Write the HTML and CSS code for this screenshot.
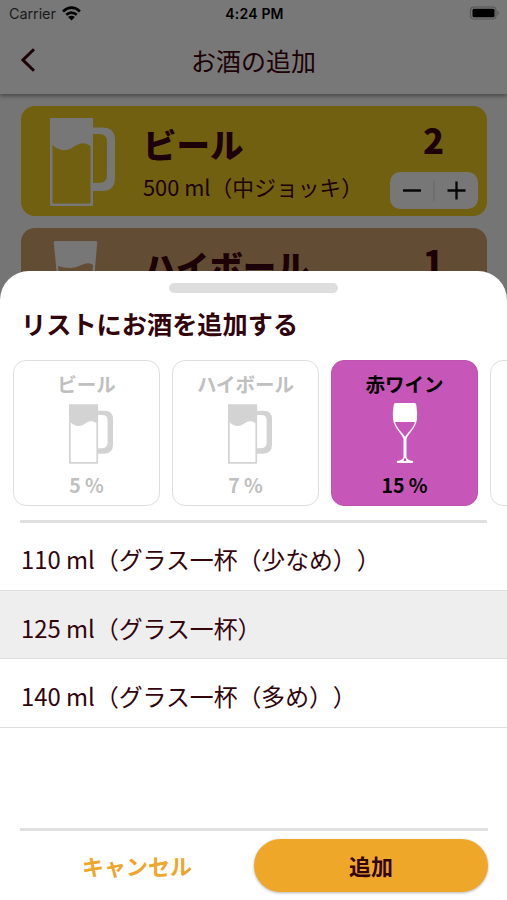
FILE: index.html
```html
<!DOCTYPE html>
<html lang="ja">
<head>
<meta charset="utf-8">
<title>お酒の追加</title>
<link rel="stylesheet" href="styles.css">
</head>
<body>
<svg class="defs" aria-hidden="true">
  <symbol id="mug" viewBox="0 0 65 88">
    <path fill-rule="evenodd" d="M0 0H43V87Q43 88 42 88H1Q0 88 0 87ZM2.500 27V84.500Q2.500 85.500 3.500 85.500H39.500Q40.500 85.500 40.500 84.500V28C32 22 27 27 20 31C13 33.500 8 32 2.500 27ZM43 9.500H52Q65 9.500 65 22V60Q65 73 52 73H43V65H49Q57 65 57 57V24Q57 16 49 16H43Z"/>
  </symbol>
</svg>
<main class="screen">
  <header class="header">
    <div class="status">
      <div class="carrier">Carrier
        <svg class="wifi" viewBox="0 0 18 14"><g fill="none" stroke="#000" stroke-width="2.500"><path d="M1 5Q9-2 17 5"/><path d="M4 8.200Q9 4 14 8.200"/></g><path d="M5.800 10.300Q9 7.800 12.200 10.300L9 13.700Z"/></svg>
      </div>
      <div class="clock">4:24 PM</div>
      <svg class="battery" viewBox="0 0 31 15"><rect x="1.500" y="1" width="25.500" height="12" rx="3.500" fill="#777" stroke="#555" stroke-width="1.200"/><rect x="3.500" y="2.700" width="22" height="8.600" rx="1.500"/><path d="M28.500 4.500Q31 7 28.500 10Z" fill="#555"/></svg>
    </div>
    <div class="navbar">
      <svg class="back" viewBox="0 0 14 24"><path d="M13 1.200L2 12L13 22.800" fill="none" stroke="#1c0206" stroke-width="3"/></svg>
      <h1>お酒の追加</h1>
      <span></span>
    </div>
  </header>
  <section class="drinks">
    <article class="drink beer">
      <svg class="drink-icon"><use href="#mug"/></svg>
      <div class="drink-text"><h2>ビール</h2><p>500 ml（中ジョッキ）</p></div>
      <div class="amount">
        <strong>2</strong>
        <div class="stepper">
          <svg viewBox="0 0 88 37"><path d="M13 18.500H31M57.500 18.500H75.500M66.500 9.500V27.500" stroke="#070707" stroke-width="2.300"/><path d="M44 8.500V29" stroke="#686868"/></svg>
        </div>
      </div>
    </article>
    <article class="drink highball">
      <svg class="drink-icon" viewBox="0 0 65 88"><path fill-rule="evenodd" d="M5 1H46Q48 1 47 5L40 88H12L4 5Q3 1 5 1ZM8 26L14 85H38L43 25C35 20 31 28 20 28Q14 28 8 26Z"/></svg>
      <div class="drink-text"><h2>ハイボール</h2></div>
      <div class="amount"><strong>1</strong></div>
    </article>
  </section>
  <section class="sheet">
    <div class="handle"></div>
    <h2 class="sheet-title">リストにお酒を追加する</h2>
    <div class="types">
      <div class="type"><span>ビール</span><svg><use href="#mug"/></svg><span>5 %</span></div>
      <div class="type"><span>ハイボール</span><svg><use href="#mug"/></svg><span>7 %</span></div>
      <div class="type selected"><span>赤ワイン</span>
        <svg viewBox="0 0 44 60"><path fill-rule="evenodd" d="M12.500 0H31.500Q33 0 33.300 2Q34.600 10 34 16C33 25 25 31 23.500 36V54Q24 57 30 58Q31 60 28 60H16Q13 60 14 58Q20 57 20.500 54V36C19 31 11 25 10 16Q9.400 10 10.700 2Q11 0 12.500 0ZM12 19C14 26 20 30 22 34C24 30 30 26 32 19ZM21.500 55L20.500 58H23.500L22.500 55Z"/></svg>
        <span>15 %</span></div>
      <div class="type"></div>
    </div>
    <ul class="sizes">
      <li>110 ml（グラス一杯（少なめ））</li>
      <li class="active">125 ml（グラス一杯）</li>
      <li>140 ml（グラス一杯（多め））</li>
    </ul>
    <footer class="actions">
      <button class="cancel">キャンセル</button>
      <button class="add">追加</button>
    </footer>
  </section>
</main>
</body>
</html>
```

FILE: styles.css
```css
* { box-sizing: border-box; }
body { margin: 0; font-family: "Noto Sans CJK JP", sans-serif; color: #32040c; text-spacing-trim: space-all; }
h1, h2, p, ul { margin: 0; padding: 0; }
.defs { display: none; }
.screen { height: 900px; overflow: hidden; display: flex; flex-direction: column; background: #757575; }
.header { flex: none; height: 94px; background: #787878; box-shadow: 0 2px 4px rgba(0,0,0,.4); }
.status { height: 28px; padding: 0 7px 0 9px; display: grid; grid-template-columns: 1fr auto 1fr; align-items: center; font-family: Inter, sans-serif; font-size: 14.500px; color: #000; }
.carrier { display: flex; align-items: center; gap: 6px; color: #1b1b1b; margin-top: -1px; letter-spacing: -.1px; }
.wifi { width: 19px; height: 15px; margin-top: -1px; }
.clock { font-weight: 600; font-size: 14px; letter-spacing: .2px; margin-top: -1px; }
.battery { width: 31px; height: 15px; justify-self: end; margin-top: -1px; }
.navbar { height: 66px; padding: 0 21px; display: grid; grid-template-columns: 1fr auto 1fr; align-items: center; }
.back { width: 14px; height: 24px; margin-top: -3px; }
.navbar h1 { font-size: 25px; line-height: 36px; margin-top: -3px; font-weight: 400; color: #1c0206; }
.drinks { flex: none; height: 177px; padding: 12px 20px 0 20.500px; display: flex; flex-direction: column; gap: 12px; }
.drink { flex: none; height: 110px; border-radius: 14px; display: flex; padding: 12px 9.500px 0 29px; color: #1c0206; }
.beer { background: #716010; }
.highball { background: #634c34; }
.drink-icon { width: 65px; height: 88px; fill: #777; flex: none; }
.drink-text { flex: 1; margin-left: 28.500px; white-space: nowrap; }
.drink-text h2 { font-size: 33.500px; line-height: 52px; font-weight: 900; }
.drink-text p { font-size: 21.800px; line-height: 33px; }
.amount { width: 88px; display: flex; flex-direction: column; align-items: center; }
.amount strong { font-size: 34.500px; line-height: 42px; font-weight: 900; }
.stepper { width: 88px; height: 37px; margin-top: 12px; border-radius: 10px; background: #777; }
.stepper svg { display: block; width: 88px; height: 37px; }
.sheet { flex: none; height: 629px; background: #fff; border-radius: 29px 29px 0 0; display: flex; flex-direction: column; }
.handle { flex: none; width: 169px; height: 10px; border-radius: 5px; background: #dedede; margin: 12px auto 0; }
.sheet-title { font-size: 25.200px; line-height: 36px; font-weight: 700; margin: 12px 21px 0; }
.types { height: 147px; margin: 19px 0 0 13px; display: flex; gap: 12px; overflow: hidden; }
.type { flex: none; width: 147px; height: 146px; padding-top: 8px; border: 1px solid #dedede; border-radius: 13px; display: flex; flex-direction: column; align-items: center; font-size: 19.500px; line-height: 30px; font-weight: 700; color: #c0c0c0; }
.type svg { width: 44px; height: 60px; margin: 5px 0 6px 8px; fill: #d3d3d3; }
.type.selected { background: #c656b7; border-color: #bd55ae; color: #000; }
.type.selected svg { fill: #fff; margin: 4px 0 7px; }
.sizes { list-style: none; margin-top: 13px; }
.sizes::before { content: ""; display: block; height: 3px; margin: 0 20px -.900px; background: #e0e0e0; }
.sizes li { height: 68.600px; padding-left: 21px; font-size: 23.850px; line-height: 73px; border-bottom: 1px solid #dedede; }
.sizes .active { background: #eee; }
.actions { margin: auto 19px 0 20px; height: 72px; border-top: 3px solid #e0e0e0; display: grid; grid-template-columns: 1fr 1fr; padding-top: 8px; }
.actions button { height: 53px; border: 0; padding: 0 0 2px; font: 700 22px "Noto Sans CJK JP", sans-serif; }
.cancel { background: none; color: #eea62b; }
.add { background: #efa72a; color: #32040c; border-radius: 27px; box-shadow: 0 1px 3px rgba(0,0,0,.3); }
```
